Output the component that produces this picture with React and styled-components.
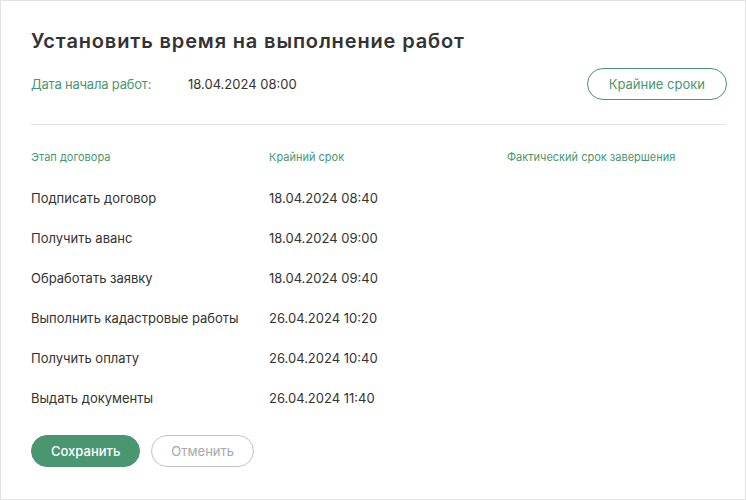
import React from 'react';
import styled, { createGlobalStyle } from 'styled-components';

const GlobalStyle = createGlobalStyle`
  html, body {
    margin: 0;
    padding: 0;
    background: #fff;
  }
  body {
    font-family: Inter, "Open Sans", sans-serif;
    color: #333;
  }
  * { box-sizing: border-box; }
`;

const stages = [
  { name: 'Подписать договор', deadline: '18.04.2024 08:40' },
  { name: 'Получить аванс', deadline: '18.04.2024 09:00' },
  { name: 'Обработать заявку', deadline: '18.04.2024 09:40' },
  { name: 'Выполнить кадастровые работы', deadline: '26.04.2024 10:20' },
  { name: 'Получить оплату', deadline: '26.04.2024 10:40' },
  { name: 'Выдать документы', deadline: '26.04.2024 11:40' },
];

const App = () => {
  return (
    <>
      <GlobalStyle />
      <Card>
        <Title>Установить время на выполнение работ</Title>
        <InfoRow>
          <StartLabel>Дата начала работ:</StartLabel>
          <StartValue>18.04.2024 08:00</StartValue>
          <Button $variant="outline">Крайние сроки</Button>
        </InfoRow>
        <Divider />
        <Table>
          <HeadCell>Этап договора</HeadCell>
          <HeadCell>Крайний срок</HeadCell>
          <HeadCell>Фактический срок завершения</HeadCell>
          {stages.map((s) => (
            <React.Fragment key={s.name}>
              <Cell>{s.name}</Cell>
              <Cell>{s.deadline}</Cell>
              <Cell />
            </React.Fragment>
          ))}
        </Table>
        <Actions>
          <Button $variant="primary">Сохранить</Button>
          <Button $variant="muted">Отменить</Button>
        </Actions>
      </Card>
    </>
  );
};

const Card = styled.div`
  width: 746px;
  height: 500px;
  border: 1px solid #e2e2e2;
  background: #fff;
  padding: 27px 18px 0 30px;
`;

const Title = styled.h1`
  margin: 0;
  font-size: 20px;
  font-weight: 600;
  line-height: 26px;
  letter-spacing: 0.85px;
  color: #333;
`;

const InfoRow = styled.div`
  display: flex;
  align-items: center;
  margin-top: 14px;
`;

const StartLabel = styled.span`
  width: 157px;
  font-size: 13px;
  letter-spacing: -0.2px;
  color: #4a9670;
`;

const StartValue = styled.span`
  flex: 1;
  font-size: 13px;
  color: #333;
`;

const Button = styled.button`
  height: 32px;
  border-radius: 16px;
  padding: 0 ${({ $variant }) => ($variant === 'outline' ? '21px' : '19px')};
  font-family: inherit;
  font-size: 13px;
  cursor: pointer;
  border: 1px solid
    ${({ $variant }) => ($variant === 'muted' ? '#c4c4c4' : '#4a9670')};
  background: ${({ $variant }) => ($variant === 'primary' ? '#4a9670' : '#fff')};
  color: ${({ $variant }) =>
    $variant === 'primary' ? '#fff' : $variant === 'muted' ? '#a8a8a8' : '#4a9670'};
  font-weight: ${({ $variant }) => ($variant === 'primary' ? 500 : 400)};
`;

const Divider = styled.hr`
  margin: 24px 1px 0 0;
  border: none;
  border-top: 1px solid #e2e2e2;
`;

const Table = styled.div`
  display: grid;
  grid-template-columns: 238px 238px 1fr;
  margin-top: 25px;
`;

const HeadCell = styled.div`
  font-size: 11px;
  line-height: 14px;
  color: #4a9670;
  padding-bottom: 14px;
`;

const Cell = styled.div`
  font-size: 13px;
  line-height: 40px;
  height: 40px;
  color: #333;
`;

const Actions = styled.div`
  display: flex;
  gap: 11px;
  margin-top: 17px;
`;

export default App;
